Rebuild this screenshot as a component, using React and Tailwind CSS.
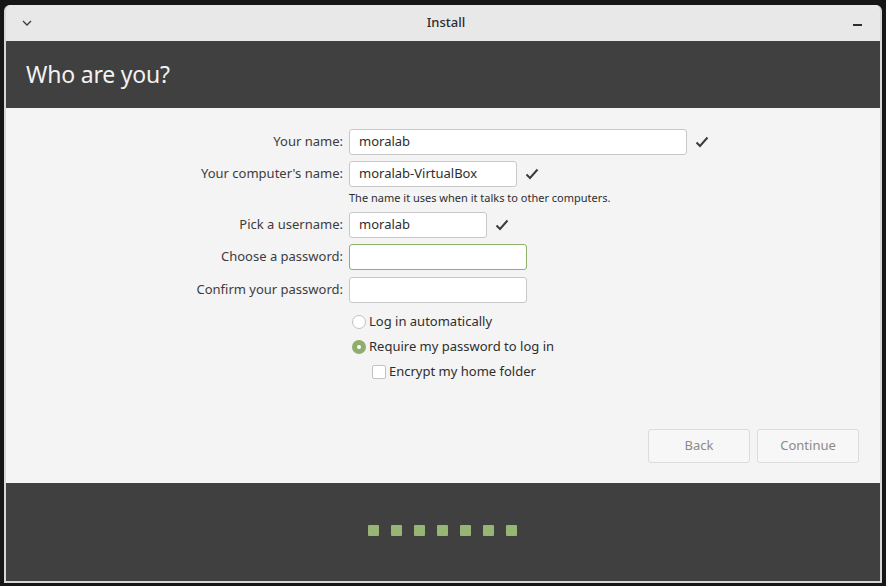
import React from 'react';

const font = { fontFamily: '"Noto Sans", "Open Sans", sans-serif' };

const Check = () => (
  <svg width="14" height="12" viewBox="0 0 14 12" className="shrink-0">
    <path d="M1.5 6.5 L5 10 L12.5 1.5" fill="none" stroke="#3c3c3c" strokeWidth="2" />
  </svg>
);

const Field = ({ label, value, width, check, focused, className = '' }) => (
  <div className={`flex items-center ${className}`}>
    <div className="w-[200px] pr-[6px] text-right text-[13px] text-[#3c3c3c]">{label}</div>
    <div
      className={`h-[26px] rounded-[3px] border bg-white px-[9px] flex items-center text-[13px] text-[#2e2e2e] ${
        focused ? 'border-[#8fb06a]' : 'border-[#c8c8c8]'
      }`}
      style={{ width }}
    >
      {value}
    </div>
    {check && (
      <div className="ml-[8px]">
        <Check />
      </div>
    )}
  </div>
);

export default function App() {
  return (
    <div className="w-[886px] h-[586px] bg-[#161616] pt-[5px] px-[4px] overflow-hidden" style={font}>
      <div className="w-[878px] h-[578px] flex flex-col rounded-t-[6px] overflow-hidden bg-[#d6d6d6] border-x-2 border-b-2 border-[#d6d6d6]">
        <div className="h-[36px] shrink-0 bg-[#e8e8e8] flex items-center justify-between px-[17px] -mx-[2px]">
          <svg width="12" height="8" viewBox="0 0 12 8">
            <path d="M2 2 L6 6 L10 2" fill="none" stroke="#3a3a3a" strokeWidth="1.3" />
          </svg>
          <div className="text-[13px] text-[#2d2d2d] font-medium pl-[6px]">Install</div>
          <div className="w-[9px] h-[1.5px] bg-[#2d2d2d] mt-[4px] mr-[3px]" />
        </div>
        <div className="h-[67px] shrink-0 bg-[#404040] flex items-center pl-[20px]">
          <h1 className="text-[23px] text-[#f2f2f2] font-normal tracking-[-0.2px]">Who are you?</h1>
        </div>
        <div className="h-[375px] shrink-0 bg-[#f4f4f4] flex flex-col pt-[21px] pl-[143px]">
          <Field label="Your name:" value="moralab" width={338} check />
          <Field className="mt-[6px]" label="Your computer's name:" value="moralab-VirtualBox" width={168} check />
          <div className="pl-[200px] text-[11px] text-[#2e2e2e] mt-[4px] leading-[14px]">
            The name it uses when it talks to other computers.
          </div>
          <Field className="mt-[7px]" label="Pick a username:" value="moralab" width={138} check />
          <Field className="mt-[6px]" label="Choose a password:" value="" width={178} focused />
          <Field className="mt-[7px]" label="Confirm your password:" value="" width={178} />
          <div className="pl-[203px] mt-[12px] flex flex-col text-[13px] text-[#2e2e2e]">
            <label className="flex items-center h-[14px]">
              <span className="w-[14px] h-[14px] rounded-full border border-[#c2c2c2] bg-white" />
              <span className="ml-[3px]">Log in automatically</span>
            </label>
            <label className="flex items-center h-[14px] mt-[11px]">
              <span className="w-[14px] h-[14px] rounded-full bg-[#8fad6c] flex items-center justify-center">
                <span className="w-[4px] h-[4px] rounded-full bg-white" />
              </span>
              <span className="ml-[3px]">Require my password to log in</span>
            </label>
            <label className="flex items-center h-[14px] mt-[11px] pl-[20px]">
              <span className="w-[14px] h-[14px] rounded-[2px] border border-[#c2c2c2] bg-white" />
              <span className="ml-[3px]">Encrypt my home folder</span>
            </label>
          </div>
          <div className="mt-auto mb-[20px] mr-[21px] flex justify-end gap-[7px]">
            <button className="w-[102px] h-[34px] rounded-[3px] border border-[#dcdcdc] bg-[#f7f7f7] text-[13px] text-[#8a8a8a]">
              Back
            </button>
            <button className="w-[102px] h-[34px] rounded-[3px] border border-[#dcdcdc] bg-[#f7f7f7] text-[13px] text-[#8a8a8a]">
              Continue
            </button>
          </div>
        </div>
        <div className="flex-1 bg-[#404040] flex pt-[42px] pl-[362px]">
          <div className="flex gap-[12px] h-[11px]">
            {[0, 1, 2, 3, 4, 5, 6].map((i) => (
              <div key={i} className="w-[11px] h-[11px] rounded-[1px] bg-[#97b676]" />
            ))}
          </div>
        </div>
      </div>
    </div>
  );
}
